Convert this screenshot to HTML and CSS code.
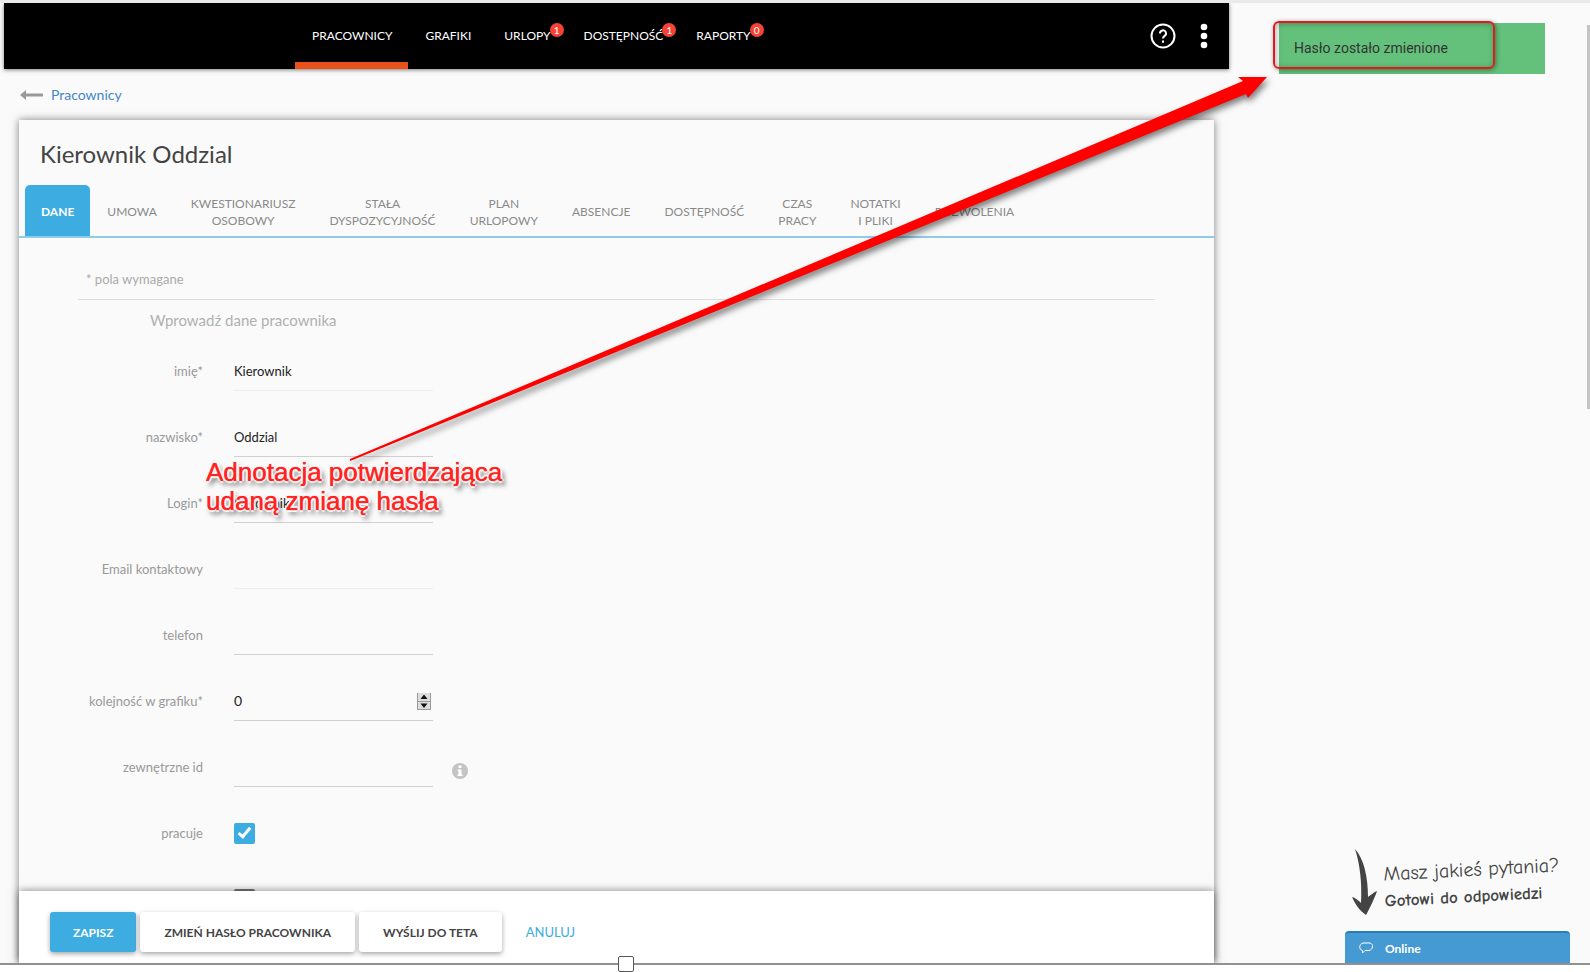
FILE: index.html
```html
<!DOCTYPE html>
<html lang="pl">

<head>
    <meta charset="UTF-8">
    <meta name="viewport" content="width=device-width, initial-scale=1.0">
    <title>Kierownik Oddzial</title>
    <link rel="stylesheet" href="styles.css">
</head>

<body>
    <div class="screen">
        <div class="app">
            <header class="topbar">
                <nav class="menu">
                    <a href="#" class="active">PRACOWNICY</a>
                    <a href="#">GRAFIKI</a>
                    <a href="#">URLOPY<span class="badge">1</span></a>
                    <a href="#">DOSTĘPNOŚĆ<span class="badge">1</span></a>
                    <a href="#">RAPORTY<span class="badge">0</span></a>
                </nav>
                <div class="tools">
                    <button type="button" class="icon-btn" aria-label="Pomoc">
                        <svg width="26" height="26" viewBox="0 0 26 26" fill="none" stroke="#fff" stroke-width="2">
                            <circle cx="13" cy="13" r="11.5" />
                            <path d="M10 10.5a3 3 0 1 1 4.6 2.4c-1.1.8-1.6 1.3-1.6 2.6" />
                            <path d="M13 17.5v2.2" />
                        </svg>
                    </button>
                    <button type="button" class="icon-btn" aria-label="Menu">
                        <svg width="8" height="26" viewBox="0 0 8 26" fill="#fff">
                            <circle cx="4" cy="4" r="3.3" />
                            <circle cx="4" cy="13" r="3.3" />
                            <circle cx="4" cy="22" r="3.3" />
                        </svg>
                    </button>
                </div>
            </header>

            <div class="back">
                <svg width="23" height="10" viewBox="0 0 23 10">
                    <path d="M0 5 6 0v3.5h17v3H6V10z" fill="#999" />
                </svg>
                <a href="#">Pracownicy</a>
            </div>

            <main class="card">
                <h1>Kierownik Oddzial</h1>
                <nav class="tabs">
                    <a href="#" class="active">DANE</a>
                    <a href="#">UMOWA</a>
                    <a href="#">KWESTIONARIUSZ<br>OSOBOWY</a>
                    <a href="#">STAŁA<br>DYSPOZYCYJNOŚĆ</a>
                    <a href="#">PLAN<br>URLOPOWY</a>
                    <a href="#">ABSENCJE</a>
                    <a href="#">DOSTĘPNOŚĆ</a>
                    <a href="#">CZAS<br>PRACY</a>
                    <a href="#">NOTATKI<br>I PLIKI</a>
                    <a href="#">POZWOLENIA</a>
                </nav>

                <form id="employee" class="form">
                    <p class="required">* pola wymagane</p>
                    <h2>Wprowadź dane pracownika</h2>
                    <div class="row">
                        <label for="imie">imię*</label>
                        <input type="text" id="imie" class="light" value="Kierownik">
                    </div>
                    <div class="row">
                        <label for="nazwisko">nazwisko*</label>
                        <input type="text" id="nazwisko" value="Oddzial">
                    </div>
                    <div class="row">
                        <label for="login">Login*</label>
                        <input type="text" id="login" value="kierownik">
                    </div>
                    <div class="row">
                        <label for="email">Email kontaktowy</label>
                        <input type="text" id="email" class="light">
                    </div>
                    <div class="row">
                        <label for="telefon">telefon</label>
                        <input type="text" id="telefon">
                    </div>
                    <div class="row">
                        <label for="kolejnosc">kolejność w grafiku*</label>
                        <div class="number">
                            <input type="number" id="kolejnosc" value="0">
                            <svg width="14" height="17" viewBox="0 0 14 17">
                                <path d="M0 0h14v17H0z" fill="#ddd" />
                                <path d="M0 8.5h14M0 16.5h14M13.5 0v17M.5 0v17" stroke="#999" fill="none" />
                                <path d="M7 1.5 10.5 6h-7zM7 15l3.5-4.5h-7z" fill="#111" />
                            </svg>
                        </div>
                    </div>
                    <div class="row">
                        <label for="zewn">zewnętrzne id</label>
                        <input type="text" id="zewn">
                        <svg class="info" width="16" height="16" viewBox="0 0 16 16">
                            <circle cx="8" cy="8" r="8" fill="#c4c4c4" />
                            <path d="M6.5 2.5h3V5h-3zM5.5 6.5h4v5h1V13h-5v-1.5h1V8h-1z" fill="#fff" />
                        </svg>
                    </div>
                    <div class="row">
                        <label for="pracuje">pracuje</label>
                        <input type="checkbox" id="pracuje" checked>
                    </div>
                    <div class="row">
                        <label for="aktywny"></label>
                        <input type="checkbox" id="aktywny" aria-label="aktywny">
                    </div>
                </form>

                <div class="actions">
                    <button type="submit" form="employee" class="btn primary">ZAPISZ</button>
                    <button type="button" class="btn">ZMIEŃ HASŁO PRACOWNIKA</button>
                    <button type="button" class="btn">WYŚLIJ DO TETA</button>
                    <a href="#">ANULUJ</a>
                </div>
            </main>
        </div>

        <aside class="side">
            <div class="toast" role="status">Hasło zostało zmienione<span class="frame"></span></div>
            <div class="chat">
                <div class="chat-invite">
                    <svg width="26" height="68" viewBox="0 0 26 68">
                        <path d="M3 0c9 10 13 28 13 48 3-2 6-5 9-6-2 6-6 15-11 24C8 62 3 55 0 48c4 1 7 4 9 6C10 34 8 15 3 0z" fill="#444" />
                    </svg>
                    <div class="chat-text">
                        <div>Masz jakieś pytania?</div>
                        <strong>Gotowi do odpowiedzi</strong>
                    </div>
                </div>
                <button type="button" class="chat-bar">
                    <svg width="14" height="12" viewBox="0 0 14 12" fill="none" stroke="#fff">
                        <path d="M4 1h7c4 1 3 7-1 7.5H6L3.5 11V8.5C-.5 7.5 0 2 4 1z" />
                    </svg>
                    Online
                </button>
            </div>
        </aside>

        <div class="scrollbar"></div>
    </div>

    <!-- red annotation drawn over the page -->
    <svg class="arrow" width="1590" height="540" viewBox="0 0 1590 540">
        <path d="M350 459 1243 81l-5-4h29l-19 21-2-4L350 461z" fill="#f00" />
    </svg>
    <div class="note">Adnotacja potwierdzająca<br>udaną zmianę hasła</div>
    <div class="handle"></div>
</body>

</html>
```
FILE: styles.css
```css
* {
    box-sizing: border-box;
}

body {
    margin: 0;
    position: relative;
    height: 100vh;
    overflow: hidden;
    background: #fff;
    font-family: Lato, "Liberation Sans", sans-serif;
    font-size: 14px;
    color: #444;
}

a {
    text-decoration: none;
}

button {
    font-family: inherit;
    cursor: pointer;
}

.screen {
    position: relative;
    display: flex;
    height: calc(100vh - 7px);
    padding-left: 4px;
    background: #fafafa;
    border-top: 3px solid #e9e9e9;
    border-bottom: 2px solid #919191;
    overflow: hidden;
}

.app {
    flex: 1;
    min-width: 0;
    display: flex;
    flex-direction: column;
}

/* top bar */
.topbar {
    display: flex;
    justify-content: space-between;
    height: 66px;
    flex-shrink: 0;
    padding: 0 21px 0 291px;
    background: #000;
    box-shadow: 0 1px 4px rgba(0, 0, 0, 0.5);
}

.menu {
    display: flex;
}

.menu a {
    position: relative;
    padding: 0 16px 0 17px;
    line-height: 66px;
    font-size: 12px;
    color: #fff;
}

.menu a.active {
    box-shadow: inset 0 -7px #e8511a;
}

.badge {
    position: absolute;
    top: 20px;
    right: 3px;
    width: 14px;
    height: 14px;
    border-radius: 50%;
    background: #f44336;
    font-size: 10px;
    line-height: 14px;
    text-align: center;
}

.tools {
    display: flex;
    align-items: center;
    gap: 24px;
}

.icon-btn {
    display: flex;
    padding: 0;
    border: none;
    background: none;
}

.back {
    display: flex;
    align-items: center;
    gap: 8px;
    height: 51px;
    flex-shrink: 0;
    padding-left: 16px;
}

.back a {
    color: #3f87c8;
}

/* card */
.card {
    display: flex;
    flex-direction: column;
    flex: 1;
    min-height: 0;
    margin: 0 15px;
    background: #fafafa;
    box-shadow: 0 0 8px rgba(0, 0, 0, 0.5);
}

h1 {
    margin: 0;
    padding: 3px 21px 0;
    font-size: 24px;
    font-weight: 400;
    line-height: 62px;
}

.tabs {
    display: flex;
    height: 53px;
    flex-shrink: 0;
    padding-left: 6px;
    border-bottom: 2px solid #90cbea;
}

.tabs a {
    display: flex;
    align-items: center;
    padding: 2px 17px 0;
    font-size: 12px;
    line-height: 17px;
    text-align: center;
    color: #8a8a8a;
}

.tabs a.active {
    padding: 2px 16px 0;
    border-radius: 5px 5px 0 0;
    background: #3dace1;
    color: #fff;
    font-weight: 700;
}

/* form */
.form {
    flex: 1;
    min-height: 0;
    overflow: hidden;
    padding: 21px 59px 0;
}

.required {
    margin: 0;
    padding: 0 8px;
    border-bottom: 1px solid #ddd;
    font-size: 13px;
    line-height: 40px;
    color: #aaa;
}

h2 {
    margin: 0 0 -3px 72px;
    font-size: 15px;
    font-weight: 400;
    line-height: 41px;
    color: #b0b0b0;
}

.row {
    display: flex;
    align-items: center;
    height: 66px;
}

.row label {
    width: 125px;
    margin-right: 31px;
    font-size: 13px;
    text-align: right;
    color: #999;
}

.row input {
    font-family: inherit;
    font-size: 13px;
    color: #222;
}

.row input[type="text"],
.row input[type="number"] {
    width: 199px;
    height: 40px;
    padding: 0;
    border: none;
    border-bottom: 1px solid #d0d0d0;
    background: none;
    outline: none;
}

.row input.light {
    border-bottom-color: #eee;
}

.row input[type="number"] {
    appearance: textfield;
    font-size: 14px;
}

.number {
    position: relative;
}

.number svg {
    position: absolute;
    top: 12px;
    right: 2px;
}

.row input[type="checkbox"] {
    appearance: none;
    width: 21px;
    height: 21px;
    margin: 0;
    border: 2px solid #777;
    border-radius: 2px;
}

.row input[type="checkbox"]:checked {
    position: relative;
    border-color: #3dace1;
    background: #3dace1;
}

.row input[type="checkbox"]:checked::after {
    content: "";
    position: absolute;
    top: 0;
    left: 5px;
    width: 7px;
    height: 13px;
    box-sizing: border-box;
    border: solid #fff;
    border-width: 0 3px 3px 0;
    transform: rotate(40deg);
}

.info {
    margin: 8px 0 0 19px;
}

.actions {
    position: relative;
    display: flex;
    align-items: center;
    gap: 4px;
    height: 72px;
    flex-shrink: 0;
    padding: 10px 31px 0;
    background: #fff;
    box-shadow: 0 0 8px rgba(0, 0, 0, 0.5);
}

.btn {
    height: 40px;
    padding: 0 24px;
    border: none;
    border-radius: 3px;
    background: #fff;
    box-shadow: 0 2px 5px rgba(0, 0, 0, 0.35);
    font-size: 12px;
    font-weight: 700;
    color: #444;
}

.btn.primary {
    padding: 0 23px;
    background: #3dace1;
    color: #fff;
}

.actions a {
    margin-left: 20px;
    font-size: 13px;
    color: #3dace1;
}

/* right side */
.side {
    display: flex;
    flex-direction: column;
    justify-content: space-between;
    width: 361px;
    padding: 20px 20px 0 50px;
}

.toast {
    position: relative;
    width: 266px;
    padding: 0 15px;
    background: #64c17b;
    font-family: Roboto, sans-serif;
    font-size: 14px;
    line-height: 51px;
    color: #333;
}

.frame {
    position: absolute;
    top: -2px;
    left: -6px;
    width: 222px;
    height: 48px;
    border: 2px solid #e01b1b;
    border-radius: 6px;
    box-shadow: 1px 1px 5px rgba(0, 0, 0, 0.4), inset 1px 1px 6px rgba(0, 0, 0, 0.3);
}

.chat {
    align-self: flex-end;
    width: 225px;
}

.chat-invite {
    display: flex;
    align-items: center;
    gap: 6px;
    padding: 0 0 14px 7px;
}

.chat-text {
    font-family: "Comic Neue", "Comic Sans MS", "Open Sans", cursive;
    font-size: 20px;
    line-height: 26px;
    white-space: nowrap;
    transform: rotate(-3deg);
}

.chat-text strong {
    font-size: 17px;
}

.chat-bar {
    display: flex;
    align-items: center;
    gap: 12px;
    width: 100%;
    height: 32px;
    padding: 0 14px;
    border: none;
    border-top: 2px solid #2b7db5;
    border-radius: 4px 4px 0 0;
    background: #469ad3;
    font-size: 12px;
    font-weight: 700;
    color: #fff;
}

.scrollbar {
    position: absolute;
    top: 22px;
    right: 0;
    width: 3px;
    height: 384px;
    background: #c4c4c4;
}

/* annotation */
.arrow {
    position: absolute;
    top: 0;
    left: 0;
    filter: drop-shadow(2px 4px 3px rgba(0, 0, 0, 0.5));
    pointer-events: none;
}

.note {
    position: absolute;
    top: 458px;
    left: 206px;
    font-family: "Liberation Sans", sans-serif;
    font-size: 26px;
    line-height: 29px;
    color: #f22;
    text-shadow: 0 0 1px #f22, 2px 0 1px #fff, -2px 0 1px #fff, 0 2px 1px #fff, 0 -2px 1px #fff, 3px 4px 5px rgba(0, 0, 0, 0.7);
}

.handle {
    position: absolute;
    bottom: 0;
    left: 618px;
    width: 16px;
    height: 16px;
    border: 1px solid #555;
    border-radius: 2px;
    background: #fff;
}
```
